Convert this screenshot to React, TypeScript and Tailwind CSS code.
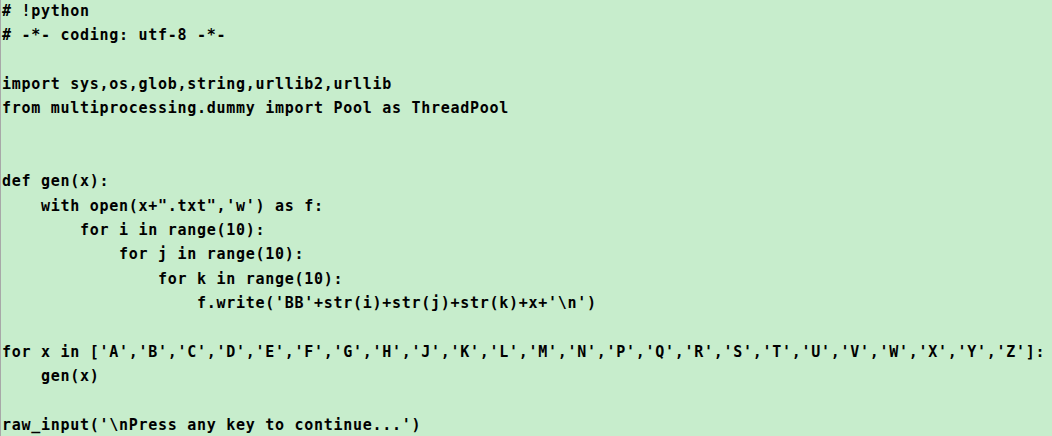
import React from "react";

const code = `# !python
# -*- coding: utf-8 -*-

import sys,os,glob,string,urllib2,urllib
from multiprocessing.dummy import Pool as ThreadPool


def gen(x):
    with open(x+".txt",'w') as f:
        for i in range(10):
            for j in range(10):
                for k in range(10):
                    f.write('BB'+str(i)+str(j)+str(k)+x+'\\n')

for x in ['A','B','C','D','E','F','G','H','J','K','L','M','N','P','Q','R','S','T','U','V','W','X','Y','Z']:
    gen(x)

raw_input('\\nPress any key to continue...')`;

export default function App() {
  return (
    <div className="w-[1052px] h-[436px] bg-[#c7edcc] border-l border-[#a8a8a8] overflow-hidden">
      <pre className="m-0 mt-[-1px] pl-[1px] font-['DejaVu_Sans_Mono',monospace] font-bold text-[15px] tracking-[0.72px] leading-[24.35px] text-black whitespace-pre">
        {code}
      </pre>
    </div>
  );
}
